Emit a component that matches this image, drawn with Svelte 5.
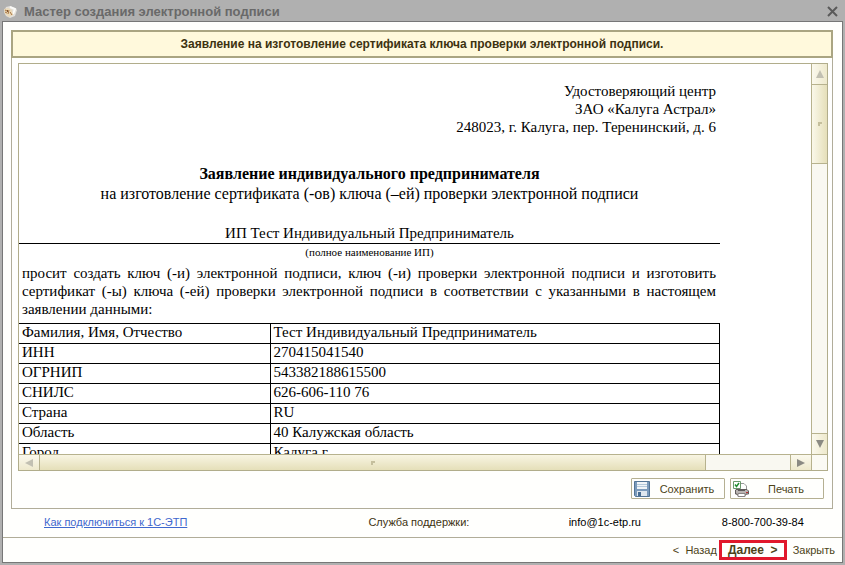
<script>
  const rows = [
    ['Фамилия, Имя, Отчество', 'Тест Индивидуальный Предприниматель'],
    ['ИНН', '270415041540'],
    ['ОГРНИП', '543382188615500'],
    ['СНИЛС', '626-606-110 76'],
    ['Страна', 'RU'],
    ['Область', '40 Калужская область'],
    ['Город', 'Калуга г'],
  ];
</script>

<div class="window">
  <header class="titlebar">
    <svg class="app-icon" width="15" height="14" viewBox="0 0 15 14" aria-hidden="true">
      <path d="M3 2L7 1L12 3L14 5L12 11L7 13L3 11L1 7Z" fill="#e2dfda" />
      <path d="M7 2L12 4L10 9" fill="none" stroke="#fbfaf7" stroke-width="2" />
      <path d="M1 4L5 3L9 5L10 10L6 12L2 9Z" fill="#ead9ba" />
      <path d="M2 5L5 6.500M2 7L4 8M6 5L5 9M7 7L9 10" stroke="#a8743e" />
      <path d="M4 5H5V7H4Z" fill="#7e5230" />
    </svg>
    <h1>Мастер создания электронной подписи</h1>
    <button class="close" aria-label="Закрыть окно">
      <svg width="11" height="11" viewBox="0 0 11 11"><path d="M1 1L10 10M10 1L1 10" stroke="#5a5a5a" stroke-width="2" /></svg>
    </button>
  </header>

  <div class="content">
    <main class="body">
      <div class="banner">Заявление на изготовление сертификата ключа проверки электронной подписи.</div>
      <section class="panel">
        <div class="viewer">
          <div class="page-view">
            <article class="page">
              <p class="addressee">Удостоверяющий центр<br />ЗАО «Калуга Астрал»<br />248023, г. Калуга, пер. Теренинский, д. 6</p>
              <h2>Заявление индивидуального предпринимателя</h2>
              <p class="subject">на изготовление сертификата (-ов) ключа (–ей) проверки электронной подписи</p>
              <p class="name">ИП Тест Индивидуальный Предприниматель</p>
              <p class="note">(полное наименование ИП)</p>
              <p class="request">просит создать ключ (-и) электронной подписи, ключ (-и) проверки электронной подписи и изготовить сертификат (-ы) ключа (-ей) проверки электронной подписи в соответствии с указанными в настоящем заявлении данными:</p>
              <table>
                <tbody>
                  {#each rows as [label, value]}
                    <tr><th scope="row">{label}</th><td>{value}</td></tr>
                  {/each}
                </tbody>
              </table>
            </article>
          </div>
          <div class="vbar">
            <button class="step up off" aria-label="Вверх"><svg width="8" height="8" viewBox="0 0 8 8"><path d="M4 0L8 8H0Z" /></svg></button>
            <div class="vthumb"><i class="grip"></i></div>
            <div class="track"></div>
            <button class="step down" aria-label="Вниз"><svg width="8" height="8" viewBox="0 0 8 8"><path d="M0 0H8L4 8Z" /></svg></button>
          </div>
          <div class="hbar">
            <button class="step left off" aria-label="Влево"><svg width="8" height="8" viewBox="0 0 8 8"><path d="M8 0V8L0 4Z" /></svg></button>
            <div class="hthumb"><i class="grip"></i></div>
            <div class="track"></div>
            <button class="step right" aria-label="Вправо"><svg width="8" height="8" viewBox="0 0 8 8"><path d="M0 0L8 4L0 8Z" /></svg></button>
          </div>
          <div class="corner"></div>
        </div>
        <div class="actions">
          <button class="action">
            <svg width="16" height="16" viewBox="0 0 16 16" aria-hidden="true">
              <path d="M.5.5H15.500V15.500H1.500L.5 14.500Z" fill="#7c9bbb" stroke="#537596" />
              <path d="M3 1H13V8H3Z" fill="#f0f5f8" />
              <path d="M3 3.500H13M3 5.500H13" stroke="#b5cadb" />
              <path d="M3 10H13V15H3Z" fill="#e0e8ef" />
              <path d="M4 11H7V15H4Z" fill="#486d92" />
            </svg>
            <span>Сохранить</span>
          </button>
          <button class="action">
            <svg width="16" height="16" viewBox="0 0 16 16" aria-hidden="true">
              <path d="M7 2.500H11L13.500 5V9H7Z" fill="#fff" stroke="#999" />
              <path d="M3 8.500H14L15.500 10V13H13V14H4V13H2.500V9Z" fill="#b9b4b1" stroke="#625d5c" />
              <path d="M5 8H12V10H5Z" fill="#5d5858" />
              <path d="M5 12.500H12V15.500H5Z" fill="#fff" stroke="#8a8583" />
              <path d="M13 11.500H15" stroke="#bd3030" />
              <path d="M.5.5H7.500V7.500H.5Z" fill="#fff" stroke="#6b9a6d" />
              <path d="M2 3.500L3.500 5.500L6 2" fill="none" stroke="#229032" stroke-width="1.500" />
            </svg>
            <span>Печать</span>
          </button>
        </div>
      </section>
      <div class="support">
        <a href="#connect">Как подключиться к 1С-ЭТП</a>
        <span class="caption">Служба поддержки:</span>
        <span>info@1c-etp.ru</span>
        <span>8-800-700-39-84</span>
      </div>
    </main>

    <footer>
      <button>&lt;&nbsp; Назад</button>
      <button class="next">Далее &nbsp;&gt;</button>
      <button>Закрыть</button>
    </footer>
  </div>
</div>

<style>
  :global(body) { margin: 0; background: #fff; }
  .window {
    box-sizing: border-box;
    min-height: 100vh;
    display: flex;
    flex-direction: column;
    border: 2px solid #b0b0b0;
    background: #fffffd;
    font: 11px/16px "Liberation Sans", Arial, sans-serif;
    color: #3d3211;
  }
  button { font: inherit; color: #4c4318; border: 0; padding: 0; background: none; white-space: nowrap; }
  svg { display: block; flex: none; }
  h1, h2, p { margin: 0; }

  .titlebar { display: flex; align-items: center; gap: 6px; height: 19px; padding: 0 4px 0 1px; background: #b0b0b0; }
  h1 { flex: 1; font-size: 13px; line-height: 19px; color: #696969; }
  .close { padding: 1px; }

  .content { flex: 1; display: flex; flex-direction: column; border: 1px solid #777; }
  .body { flex: 1; display: flex; flex-direction: column; padding: 8px 9px 0 8px; }
  .banner { border: 2px solid #aaa582; background: #fff9dc; height: 24px; font-size: 12px; line-height: 24px; font-weight: bold; text-align: center; }
  .panel { flex: 1; display: flex; flex-direction: column; border: 1px solid #b1ad99; border-top: 0; padding: 5px 4px 9px 6px; }
  .viewer { flex: 1; display: grid; grid-template: minmax(0, 1fr) 16px / minmax(0, 1fr) 16px; border: 1px solid #b1ad8b; }
  .page-view { position: relative; overflow: hidden; min-height: 390px; background: #fff; }
  .page { position: absolute; top: 0; left: 0; width: 701px; color: #000; font: 15px/18px "Liberation Serif", "Times New Roman", serif; }
  .addressee { padding: 18px 4px 0 0; text-align: right; }
  h2 { margin-top: 28px; font-size: 16px; line-height: 20px; text-align: center; }
  .subject { font-size: 16px; line-height: 20px; text-align: center; }
  .name { margin-top: 20px; line-height: 19px; text-align: center; border-bottom: 1px solid #000; }
  .note { font-size: 11px; line-height: 16px; text-align: center; }
  .request { padding: 4px 4px 5px 3px; text-align: justify; }
  table { width: 100%; border-collapse: collapse; table-layout: fixed; }
  th, td { box-sizing: border-box; height: 20px; padding: 0 3px 2px; border: 1px solid #000; line-height: 17px; font-weight: normal; text-align: left; vertical-align: top; }
  th { width: 251px; border-left: 0; }

  .step { display: grid; place-items: center; background: #f8f5e4; }
  .step svg { fill: #8b8a83; }
  .off svg { fill: #c2c0b2; }
  .track { flex: 1; background: #f9f8f1; }
  .vbar { display: flex; flex-direction: column; border-left: 1px solid #b7b28e; }
  .vbar .step { height: 20px; background: linear-gradient(90deg, #fbf9ee, #eee9cc); }
  .vthumb { height: 78px; display: grid; place-items: center; border: solid #b7b28e; border-width: 1px 0; background: linear-gradient(90deg, #faf8ea, #e5dfb9); }
  .vbar .down { height: 21px; border-top: 1px solid #b7b28e; }
  .hbar { display: flex; border-top: 1px solid #b7b28e; }
  .hbar .step { width: 20px; background: linear-gradient(#fbf9ee, #eee9cc); }
  .hthumb { flex: 0 0 84%; display: grid; place-items: center; border: solid #b7b28e; border-width: 0 1px; background: linear-gradient(#f8f5e3, #e5dfb9); }
  .hbar .right { width: 21px; border-left: 1px solid #b7b28e; }
  .corner { background: #fbfaf4; border-left: 1px solid #b7b28e; border-top: 1px solid #b7b28e; }
  .grip { width: 4px; height: 4px; border: solid #c5bf9d; border-width: 2px 0 0 2px; box-sizing: border-box; }

  .actions { display: flex; justify-content: flex-end; gap: 5px; padding: 7px 4px 0 0; }
  .action { box-sizing: border-box; width: 94px; height: 21px; display: flex; align-items: center; padding: 0 2px; border: 1px solid #b5b092; border-radius: 1px; }
  .action span { flex: 1; padding-left: 2px; text-align: center; }

  .support { height: 23px; padding: 5px 0 0 33px; display: grid; grid-template-columns: 324fr 200fr 153fr 111fr; align-items: start; color: #000; }
  .support > * { justify-self: start; white-space: nowrap; }
  a { color: #3f68ce; }
  .caption { color: #3d3211; }

  footer { display: flex; justify-content: flex-end; align-items: center; gap: 2px; height: 24px; padding-right: 7px; border-top: 1px solid #b1ad99; }
  .next { height: 20px; box-sizing: border-box; padding: 0 6px; margin-right: 4px; border: 3px solid #e1182c; font-size: 12px; font-weight: bold; line-height: 14px; }
</style>
